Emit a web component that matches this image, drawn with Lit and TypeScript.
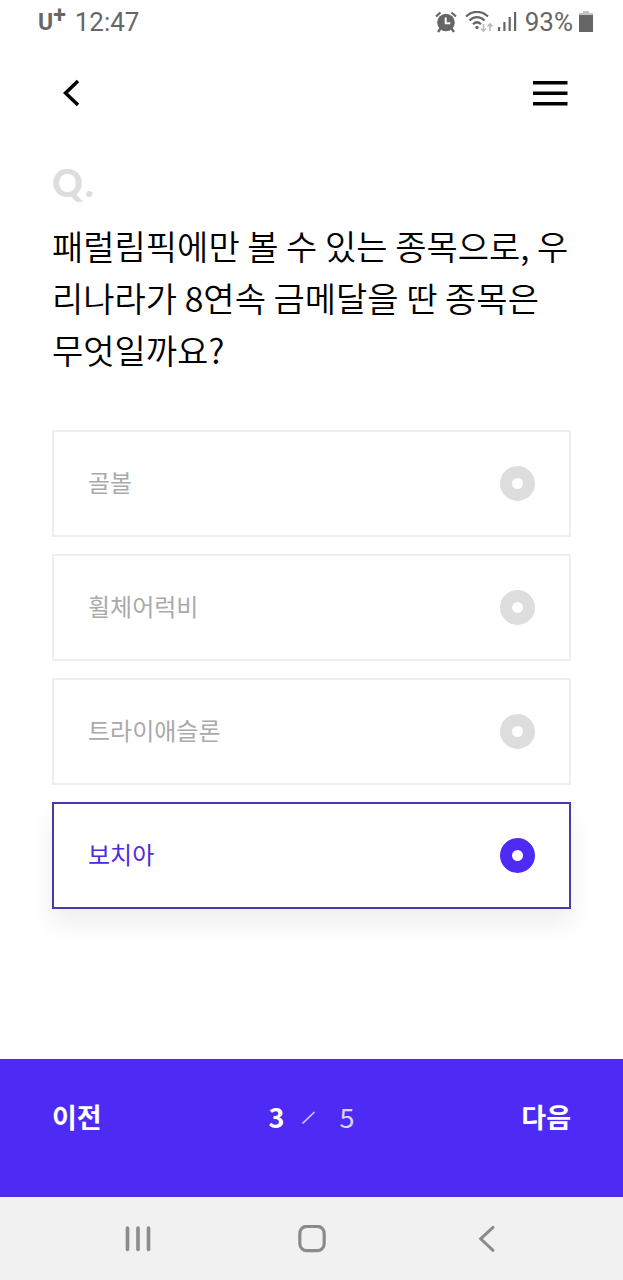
import { LitElement, html, css } from "lit";
import { customElement, state } from "lit/decorators.js";
import { classMap } from "lit/directives/class-map.js";

@customElement("status-bar")
class StatusBar extends LitElement {
  static styles = css`
    :host {
      display: flex;
      justify-content: space-between;
      align-items: center;
      height: 44px;
      padding: 0 30px 0 38px;
      color: #666;
      font: 400 26px/30px Roboto, sans-serif;
    }
    .group {
      display: flex;
      align-items: center;
    }
    .carrier {
      display: flex;
      align-items: flex-start;
      height: 30px;
      margin-right: 9px;
      font-weight: 700;
      font-size: 23px;
      line-height: 32px;
    }
    .plus {
      font-size: 23px;
      line-height: 18px;
    }
    .alarm {
      margin-right: 8px;
    }
    .wifi {
      margin-right: 5px;
    }
    .signal {
      margin-right: 8px;
    }
    .battery {
      margin-left: 6px;
    }
    svg {
      display: block;
    }
  `;

  render() {
    return html`
      <div class="group">
        <span class="carrier"><span>U</span><span class="plus">+</span></span>
        <span>12:47</span>
      </div>
      <div class="group">
        <svg class="alarm" width="22" height="22" viewBox="0 0 22 22" fill="none" stroke="#666">
          <circle cx="11" cy="11.500" r="8.800" fill="#666" stroke="none" />
          <path d="M1 5.500 5.500 1.500M21 5.500 16.500 1.500" stroke-width="2.200" />
          <path d="M5.500 17.500 3 21M16.500 17.500 19 21" stroke-width="2.400" />
          <path d="M10.700 6.500v5.700h4.600" stroke="#fff" stroke-width="2" />
        </svg>
        <svg class="wifi" width="28" height="22" viewBox="0 0 28 22" fill="none" stroke="#666" stroke-width="2.200">
          <path d="M1 5.500C7.500-.700 16.500-.700 23 5.500M4.500 9.500C9 5 15 5 19.500 9.500M8 13.200C10.500 10.800 13.500 10.800 16 13.200" />
          <circle cx="12" cy="16.500" r="1.700" fill="#666" stroke="none" />
          <path d="M18.500 13v7M16 17.500l2.500 2.500 2.500-2.500M25 20v-7M22.500 15.500 25 13l2.500 2.500" stroke="#bbb" stroke-width="1.600" />
        </svg>
        <svg class="signal" width="19" height="20" viewBox="0 0 19 20" fill="#666">
          <path d="M0 15h2.200v4H0zM5.300 10h2.200v9H5.300zM10.600 5h2.200v14h-2.200zM16 0h2.200v19H16z" />
        </svg>
        <span>93%</span>
        <svg class="battery" width="14" height="22" viewBox="0 0 14 22">
          <path d="M4 0h6v2h4v4H0V2h4z" fill="#c6c6c6" />
          <path d="M0 4h14v17H0z" fill="#666" />
        </svg>
      </div>
    `;
  }
}

@customElement("system-nav")
class SystemNav extends LitElement {
  static styles = css`
    :host {
      display: flex;
      justify-content: space-between;
      align-items: center;
      height: 83px;
      padding: 0 120px;
      background: #f1f1f1;
    }
    button {
      display: grid;
      place-items: center;
      width: 36px;
      height: 36px;
      padding: 0;
      border: 0;
      background: none;
    }
  `;

  render() {
    return html`
      <button aria-label="최근 앱">
        <svg width="28" height="28" viewBox="0 0 28 28" stroke="#8b8b8b" stroke-width="3.600" stroke-linecap="round">
          <path d="M3.500 3v21.500M14 3v21.500M24.500 3v21.500" />
        </svg>
      </button>
      <button aria-label="홈">
        <svg width="28" height="28" viewBox="0 0 28 28" fill="none" stroke="#8b8b8b" stroke-width="3.200">
          <rect x="1.800" y="1.300" width="24.400" height="24.400" rx="7" />
        </svg>
      </button>
      <button aria-label="뒤로">
        <svg width="28" height="28" viewBox="0 0 28 28" fill="none" stroke="#8b8b8b" stroke-width="3" stroke-linecap="round">
          <path d="M22 2.300 9.700 13.800 22 25.300" />
        </svg>
      </button>
    `;
  }
}

@customElement("app-root")
class AppRoot extends LitElement {
  static styles = css`
    :host {
      display: flex;
      flex-direction: column;
      min-height: 100vh;
      background: #fff;
      color: #000;
      font-family: "Noto Sans CJK KR", sans-serif;
    }
    button {
      padding: 0;
      border: 0;
      background: none;
      color: inherit;
      font: inherit;
      cursor: pointer;
    }
    svg {
      display: block;
    }
    .toolbar {
      display: flex;
      justify-content: space-between;
      align-items: center;
      height: 98px;
      padding: 0 52px;
    }
    .tool {
      display: grid;
      place-items: center;
      width: 40px;
      height: 40px;
    }
    .quiz {
      flex: 1;
      padding: 20px 52px 40px;
    }
    .mark {
      display: flex;
      gap: 2px;
      margin: 0;
      color: #ddd;
      font: 900 38px/40px Lato, sans-serif;
    }
    .question {
      margin: 18px 0 0;
      font-size: 34px;
      line-height: 52px;
      font-weight: 350;
    }
    .options {
      display: grid;
      gap: 17px;
      margin: 54px 0 0;
      padding: 0;
      border: 0;
    }
    .option {
      display: flex;
      justify-content: space-between;
      align-items: center;
      box-sizing: border-box;
      height: 107px;
      padding: 0 34px;
      border: 2px solid #eee;
      background: #fff;
      color: #aaa;
      font-size: 24px;
      line-height: 36px;
      font-weight: 400;
      cursor: pointer;
    }
    .option.selected {
      border-color: #4c38ad;
      color: #4d2bdb;
      box-shadow: 0 14px 24px rgba(0, 0, 0, 0.07);
    }
    .text {
      padding-bottom: 4px;
    }
    .radio {
      appearance: none;
      width: 35px;
      height: 35px;
      margin: 0;
      border: 12px solid #ddd;
      border-radius: 50%;
      background: #fff;
    }
    .radio:checked {
      border-color: #4d2bf4;
    }
    .pager {
      display: grid;
      grid-template-columns: 1fr auto 1fr;
      align-items: start;
      box-sizing: border-box;
      height: 138px;
      padding: 38px 52px 0;
      background: #4d2bf4;
      color: #fff;
      font-size: 27px;
      line-height: 40px;
      font-weight: 700;
    }
    .prev {
      justify-self: start;
    }
    .next {
      justify-self: end;
    }
    .count {
      display: flex;
      align-items: center;
      gap: 18px;
      margin: 0;
    }
    .total {
      font-weight: 400;
      opacity: 0.8;
    }
  `;

  @state() private selected = 3;

  private options = ["골볼", "휠체어럭비", "트라이애슬론", "보치아"];

  render() {
    return html`
      <status-bar></status-bar>
      <header class="toolbar">
        <button class="tool" aria-label="뒤로 가기">
          <svg width="18" height="28" viewBox="0 0 18 28" fill="none" stroke="#000" stroke-width="3.500">
            <path d="M15 2 2.500 14 15 26" />
          </svg>
        </button>
        <button class="tool" aria-label="메뉴">
          <svg width="36" height="26" viewBox="0 0 36 26" fill="#000">
            <path d="M0 1h34.500v3.500H0zM0 11.500h34.500V15H0zM0 22h34.500v3.500H0z" />
          </svg>
        </button>
      </header>
      <main class="quiz">
        <p class="mark"><span>Q</span><span>.</span></p>
        <h1 class="question" id="question">패럴림픽에만 볼 수 있는 종목으로, 우리나라가 8연속 금메달을 딴 종목은 무엇일까요?</h1>
        <fieldset class="options" aria-labelledby="question">
          ${this.options.map(
            (text, i) => html`
              <label class=${classMap({ option: true, selected: i === this.selected })}>
                <span class="text">${text}</span>
                <input
                  class="radio"
                  type="radio"
                  name="answer"
                  .checked=${i === this.selected}
                  @change=${() => (this.selected = i)}
                />
              </label>
            `
          )}
        </fieldset>
      </main>
      <footer class="pager">
        <button class="prev">이전</button>
        <p class="count">
          <span>3</span>
          <svg width="19" height="14" viewBox="0 0 19 14" stroke="#d0c8fc" stroke-width="1.600" role="img" aria-label="/">
            <path d="M.500 13.500 12.500 2" />
          </svg>
          <span class="total">5</span>
        </p>
        <button class="next">다음</button>
      </footer>
      <system-nav></system-nav>
    `;
  }
}
